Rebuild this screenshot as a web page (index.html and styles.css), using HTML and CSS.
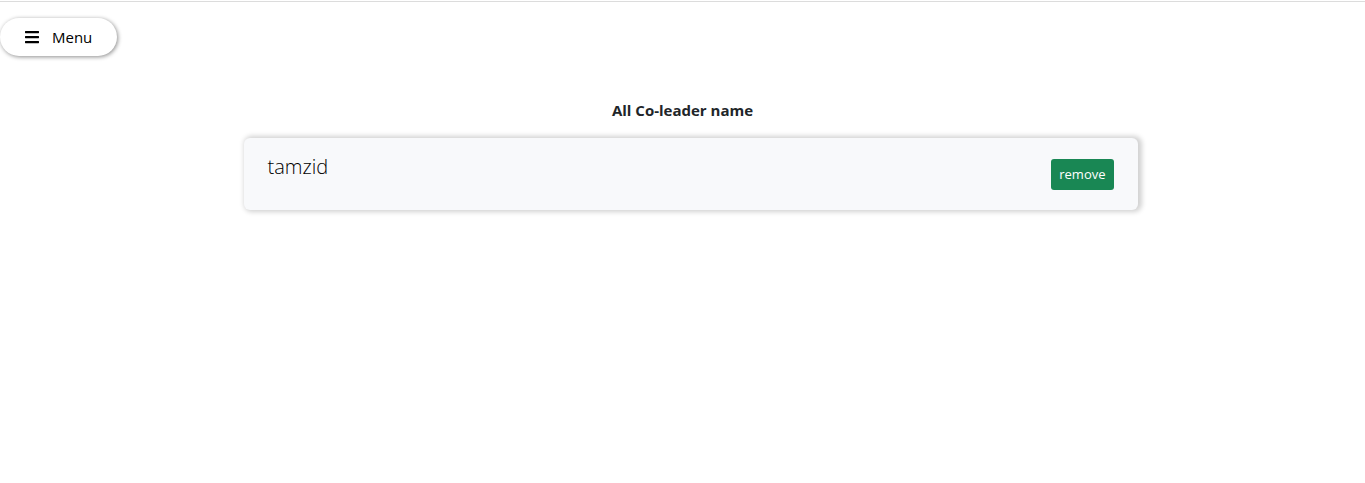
FILE: index.html
```html
<!DOCTYPE html>
<html lang="en">
<head>
<meta charset="utf-8">
<title>Co-leaders</title>
<link rel="stylesheet" href="styles.css">
</head>
<body>
<header class="topbar">
  <button class="menu-button" type="button">
    <svg class="menu-icon" viewBox="0 0 448 512" aria-hidden="true"><path d="M16 132h416c8.837 0 16-7.163 16-16V76c0-8.837-7.163-16-16-16H16C7.163 60 0 67.163 0 76v40c0 8.837 7.163 16 16 16zm0 160h416c8.837 0 16-7.163 16-16v-40c0-8.837-7.163-16-16-16H16c-8.837 0-16 7.163-16 16v40c0 8.837 7.163 16 16 16zm0 160h416c8.837 0 16-7.163 16-16v-40c0-8.837-7.163-16-16-16H16c-8.837 0-16 7.163-16 16v40c0 8.837 7.163 16 16 16z"/></svg>
    <span>Menu</span>
  </button>
</header>
<main class="content">
  <h1 class="title">All Co-leader name</h1>
  <ul class="leaders">
    <li class="leader">
      <span class="leader-name">tamzid</span>
      <button class="remove-button" type="button">remove</button>
    </li>
  </ul>
</main>
</body>
</html>
```

FILE: styles.css
```css
* { box-sizing: border-box; }
body {
  margin: 0;
  background: #fff;
  color: #212529;
  font: 16px/24px "Segoe UI", "Open Sans", "Noto Sans", sans-serif;
}
.topbar {
  margin-top: 1px;
  padding-top: 16px;
  border-top: 1px solid #dcdcdc;
}
.menu-button {
  display: flex;
  align-items: center;
  gap: 13px;
  padding: 7px 25px;
  border: 0;
  border-radius: 20px;
  background: #fff;
  color: #000;
  font: inherit;
  font-size: 15px;
  box-shadow: 1px 1px 4px rgba(0, 0, 0, 0.45);
}
.menu-icon { width: 14px; height: 16px; }
.content {
  padding: 42px 0 24px;
}
.title {
  margin: 0;
  text-align: center;
  font-size: 15px;
  line-height: 24px;
  font-weight: 700;
}
.leaders {
  list-style: none;
  width: 910px;
  max-width: 100%;
  margin: 16px auto 0;
  padding: 0 0 0 16px;
}
.leader {
  display: flex;
  justify-content: space-between;
  align-items: flex-start;
  padding: 16px 24px 20px;
  border-radius: 6px;
  background: #f8f9fb;
  box-shadow: 2px 0 5px 2px rgba(0, 0, 0, 0.18);
}
.leader-name {
  color: #000;
  font-size: 20px;
  line-height: 26px;
  font-weight: 300;
}
.remove-button {
  margin-top: 5px;
  padding: 5px 8px;
  border: 0;
  border-radius: 3px;
  background: #198754;
  color: #fff;
  font: inherit;
  font-size: 13px;
  line-height: 21px;
}
```
